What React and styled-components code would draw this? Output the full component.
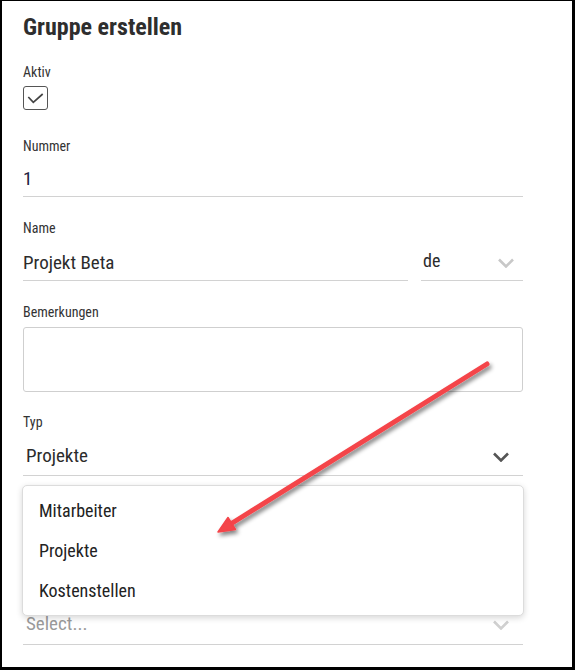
import React from "react";
import styled, { createGlobalStyle } from "styled-components";

const FONT = '"Roboto Condensed", "Liberation Sans Narrow", "Roboto", sans-serif';

const Global = createGlobalStyle`
  html, body { margin: 0; padding: 0; background: #fff; }
  * { box-sizing: border-box; }
`;

const Frame = styled.div`
  position: relative;
  width: 575px;
  height: 670px;
  overflow: hidden;
  background: #fff;
  border-style: solid;
  border-color: #000;
  border-width: 1px 3px 3px 2px;
  padding: 12px 49px 0 21px;
  font-family: ${FONT};
  font-stretch: condensed;
  color: #333;
`;

const Title = styled.h1`
  margin: 0;
  font-size: 24px;
  line-height: 28px;
  font-weight: 700;
  color: #2e2e2e;
`;

const Label = styled.div`
  margin-top: ${(p) => p.$gap ?? 23}px;
  height: 17px;
  font-size: 14px;
  line-height: 17px;
  color: #333;
`;

const CheckBox = styled.div`
  margin-top: 5px;
  width: 25px;
  height: 24px;
  border: 1px solid #555;
  border-radius: 3px;
  display: flex;
  align-items: center;
  justify-content: center;
`;

const Row = styled.div`
  display: flex;
  gap: 13px;
  align-items: flex-start;
`;

const Input = styled.div`
  margin-top: ${(p) => p.$gap ?? 11}px;
  flex: ${(p) => (p.$grow ? 1 : "none")};
  width: ${(p) => (p.$w ? `${p.$w}px` : "auto")};
  height: ${(p) => p.$h ?? 33}px;
  border-bottom: 1px solid #d2d2d2;
  font-size: 19px;
  line-height: 30px;
  color: ${(p) => p.$color ?? "#2b2b2b"};
  padding-left: ${(p) => p.$pl ?? 0}px;
  display: flex;
  align-items: flex-start;
  justify-content: space-between;
`;

const SmallSelect = styled(Input)`
  font-size: 18px;
  line-height: 26px;
  padding-left: 2px;
  padding-right: 9px;
`;

const TextArea = styled.div`
  margin-top: 6px;
  height: 65px;
  border: 1px solid #cfcfcf;
  border-radius: 3px;
`;

const Placeholder = styled.span`
  color: #9a9a9a;
`;

const Chevron = styled.svg`
  flex: none;
  margin-top: ${(p) => p.$top}px;
  margin-right: ${(p) => p.$right ?? 0}px;
`;

const Menu = styled.div`
  position: absolute;
  left: 20px;
  top: 484px;
  width: 502px;
  height: 131px;
  background: #fff;
  border: 1px solid #dcdcdc;
  border-radius: 5px;
  box-shadow: 0 2px 6px rgba(0, 0, 0, 0.16);
  padding: 5px 0 4px;
`;

const MenuItem = styled.div`
  height: 40px;
  line-height: 40px;
  padding-left: 16px;
  font-size: 18px;
  color: #222;
`;

const Overlay = styled.svg`
  position: absolute;
  left: -2px;
  top: -1px;
  pointer-events: none;
`;

function Down({ color, top, right }) {
  return (
    <Chevron width="16" height="10" viewBox="0 0 16 10" $top={top} $right={right}>
      <polyline points="1,1.5 8,8.5 15,1.5" fill="none" stroke={color} strokeWidth="2.6" />
    </Chevron>
  );
}

export default function App() {
  return (
    <>
      <Global />
      <Frame>
        <Title>Gruppe erstellen</Title>

        <Label>Aktiv</Label>
        <CheckBox>
          <svg width="23" height="22" viewBox="0 0 23 22">
            <polyline points="4.3,10 9.3,15.3 18.7,7" fill="none" stroke="#444" strokeWidth="1.7" />
          </svg>
        </CheckBox>

        <Label $gap={28}>Nummer</Label>
        <Input $gap={9} $color="#22223f">1</Input>

        <Label>Name</Label>
        <Row>
          <Input $grow>Projekt Beta</Input>
          <SmallSelect $w={102}>
            <span>de</span>
            <Down color="#c8c8c8" top={10} />
          </SmallSelect>
        </Row>

        <Label>Bemerkungen</Label>
        <TextArea />

        <Label $gap={22}>Typ</Label>
        <Input $gap={10} $h={35} $pl={3}>
          <span>Projekte</span>
          <Down color="#555" top={11} right={14} />
        </Input>

        {/* field hidden beneath the open menu */}
        <Label $gap={22} />
        <Input $gap={10} $h={35} $pl={3} />

        <Label $gap={22} />
        <Input $gap={10} $h={36} $pl={3}>
          <Placeholder>Select...</Placeholder>
          <Down color="#d0d0d0" top={11} right={14} />
        </Input>

        <Menu>
          <MenuItem>Mitarbeiter</MenuItem>
          <MenuItem>Projekte</MenuItem>
          <MenuItem>Kostenstellen</MenuItem>
        </Menu>

        <Overlay width="575" height="670" viewBox="0 0 575 670">
          <defs>
            <filter id="sh" x="-20%" y="-20%" width="140%" height="140%">
              <feGaussianBlur in="SourceAlpha" stdDeviation="2" />
              <feOffset dx="2" dy="3" result="b" />
              <feComponentTransfer>
                <feFuncA type="linear" slope="0.5" />
              </feComponentTransfer>
              <feMerge>
                <feMergeNode />
                <feMergeNode in="SourceGraphic" />
              </feMerge>
            </filter>
          </defs>
          <g filter="url(#sh)">
            <line x1="487" y1="364" x2="229" y2="525" stroke="#f4444a" strokeWidth="5" strokeLinecap="round" />
            <polygon points="218,532 228,517.5 235.5,529.5" fill="#f4444a" stroke="#f4444a" strokeWidth="1.5" strokeLinejoin="round" />
          </g>
        </Overlay>
      </Frame>
    </>
  );
}
